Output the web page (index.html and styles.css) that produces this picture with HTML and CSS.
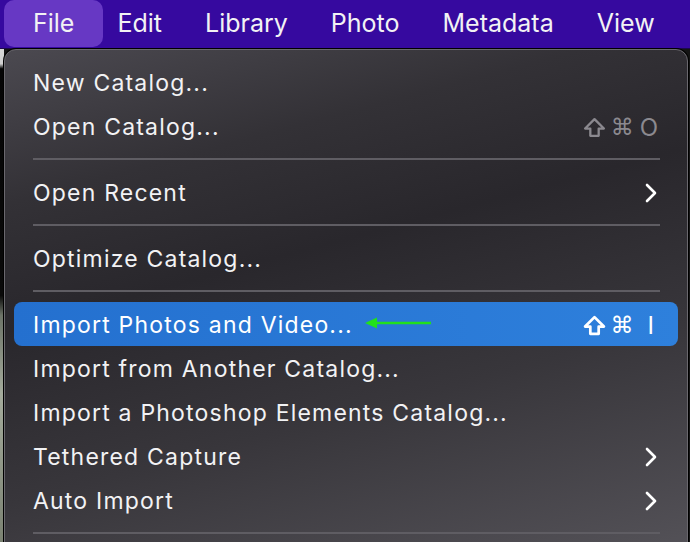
FILE: index.html
```html
<!DOCTYPE html>
<html lang="en">
<head>
  <meta charset="UTF-8" />
  <title>File Menu</title>
  <link rel="stylesheet" href="styles.css">
</head>
<body>
  <div class="menubar">
    <div class="menu-title active">File</div>
    <div class="menu-title">Edit</div>
    <div class="menu-title">Library</div>
    <div class="menu-title">Photo</div>
    <div class="menu-title">Metadata</div>
    <div class="menu-title">View</div>
  </div>

  <div class="stage">
    <div class="backdrop"></div>
    <div class="dropdown">
      <div class="item"><span>New Catalog...</span></div>
      <div class="item"><span>Open Catalog...</span>
        <span class="keys">
          <svg class="shift" viewBox="0 0 22 20"><path d="M11 2 L20 11 L15 11 L15 18 L7 18 L7 11 L2 11 Z" /></svg>
          <span class="cmd">⌘</span><span class="key">O</span>
        </span>
      </div>
      <div class="sep"></div>
      <div class="item"><span>Open Recent</span>
        <svg class="chev" viewBox="0 0 12 20"><polyline points="2,2 10,10 2,18" /></svg>
      </div>
      <div class="sep"></div>
      <div class="item"><span>Optimize Catalog...</span></div>
      <div class="sep"></div>
      <div class="item selected">
        <span>Import Photos and Video...<svg class="pointer" viewBox="0 0 68 14"><polygon points="0,7 12,1.5 12,12.5" /><line x1="10" y1="7" x2="66" y2="7" /></svg></span>
        <span class="keys">
          <svg class="shift" viewBox="0 0 22 20"><path d="M11 2 L20 11 L15 11 L15 18 L7 18 L7 11 L2 11 Z" /></svg>
          <span class="cmd">⌘</span><span class="key">I</span>
        </span>
      </div>
      <div class="item"><span>Import from Another Catalog...</span></div>
      <div class="item"><span>Import a Photoshop Elements Catalog...</span></div>
      <div class="item"><span>Tethered Capture</span>
        <svg class="chev" viewBox="0 0 12 20"><polyline points="2,2 10,10 2,18" /></svg>
      </div>
      <div class="item"><span>Auto Import</span>
        <svg class="chev" viewBox="0 0 12 20"><polyline points="2,2 10,10 2,18" /></svg>
      </div>
      <div class="sep"></div>
    </div>
  </div>
</body>
</html>
```

FILE: styles.css
```css
body {
  margin: 0;
  width: 690px;
  height: 542px;
  overflow: hidden;
  background: #141414;
  font-family: Inter, "Open Sans", sans-serif;
  color: #f2f2f4;
}

.menubar {
  display: flex;
  align-items: center;
  height: 49px;
  padding-left: 4px;
  background: #36099f;
  border-bottom: 1px solid #1c0a4a;
  box-sizing: border-box;
}

.menu-title {
  font-size: 25px;
  padding: 0 21.5px;
  line-height: 47px;
  height: 47px;
  align-self: flex-start;
}

.menu-title.active {
  padding: 0 29px;
  margin-right: -7.5px;
  background: #6738c4;
  border-radius: 10px;
}

.stage {
  display: flex;
  height: 493px;
}

.backdrop {
  width: 4px;
  flex-shrink: 0;
  background: linear-gradient(180deg, #d8d8d8 0%, #d0d0d0 3%, #050505 4%, #0a0a0a 50%, #6d7468 54%, #a4ab9c 70%, #7b8272 100%);
}

.dropdown {
  width: 684px;
  height: 520px;
  box-sizing: border-box;
  padding: 10px 9px 0 9px;
  border: 1px solid #6a686e;
  border-radius: 12px;
  background: linear-gradient(165deg, #4b4950 0%, #333136 22%, #29272c 40%, #38363b 65%, #56545a 100%);
  box-shadow: 0 0 0 1px #000;
}

.item {
  display: flex;
  align-items: center;
  justify-content: space-between;
  height: 44px;
  box-sizing: border-box;
  padding: 2px 20px 0 19px;
  font-size: 23px;
  letter-spacing: 1.2px;
  border-radius: 8px;
  white-space: nowrap;
}

.item.selected {
  background: linear-gradient(90deg, #2470cf, #2e80dc);
  color: #fff;
}

.keys {
  display: flex;
  align-items: center;
  color: #8b898f;
  letter-spacing: 0;
}

.shift {
  width: 23px;
  height: 21px;
  margin-right: 5px;
}

.shift path {
  fill: none;
  stroke: #8b898f;
  stroke-width: 2.2;
  stroke-linejoin: round;
}

.cmd {
  font-family: "DejaVu Sans", sans-serif;
  font-size: 23px;
}

.key {
  font-size: 24px;
  margin-left: 6px;
}

.selected .keys {
  color: #fff;
}

.selected .shift path {
  stroke: #fff;
  stroke-width: 2.6;
}

.selected .key {
  margin: 0 4px 0 14px;
}

.chev {
  width: 12px;
  height: 20px;
  margin-right: 1px;
}

.chev polyline {
  fill: none;
  stroke: #fff;
  stroke-width: 2.6;
  stroke-linecap: round;
  stroke-linejoin: round;
}

.pointer {
  width: 68px;
  height: 14px;
  margin-left: 12px;
  vertical-align: 3px;
}

.pointer polygon {
  fill: #22e01c;
}

.pointer line {
  stroke: #22e01c;
  stroke-width: 2.5;
}

.sep {
  height: 2px;
  margin: 10px 18px 10px 19px;
  background: #5f5d63;
}
```
